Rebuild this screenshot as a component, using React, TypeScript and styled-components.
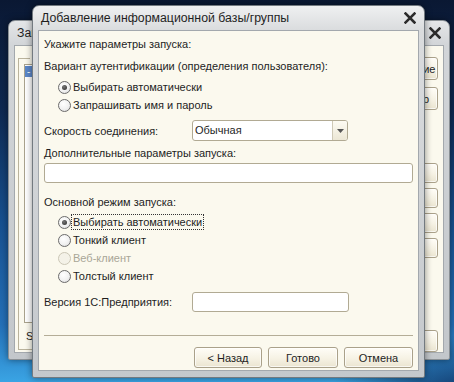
import React from 'react';
import styled, { createGlobalStyle } from 'styled-components';

const GlobalStyle = createGlobalStyle`
  html, body {
    margin: 0;
    padding: 0;
  }
  body {
    font-family: "Liberation Sans", Arial, sans-serif;
    font-size: 11px;
    color: #1e1e1e;
  }
`;

const Desktop = styled.div`
  position: relative;
  width: 454px;
  height: 382px;
  overflow: hidden;
  background:
    radial-gradient(ellipse 140px 60px at 470px 395px, #0b2a5c 0%, rgba(11, 42, 92, 0) 100%),
    linear-gradient(180deg, #0a1833 0%, #0e2850 28%, #17508f 58%, #2470b8 85%, #3aa4e4 100%);
`;

const Window = styled.div<{ $left: number; $top: number; $width: number; $height: number; $faded?: boolean }>`
  position: absolute;
  left: ${({ $left }) => $left}px;
  top: ${({ $top }) => $top}px;
  width: ${({ $width }) => $width}px;
  height: ${({ $height }) => $height}px;
  box-sizing: border-box;
  display: flex;
  flex-direction: column;
  padding: 0 5px 6px;
  border: 1px solid ${({ $faded }) => ($faded ? '#8a9095' : '#737a80')};
  border-radius: 7px 7px 2px 2px;
  background: ${({ $faded }) =>
    $faded
      ? 'linear-gradient(180deg, #e4e6e8 0px, #d2d5d8 24px, #c3c7cb 100%)'
      : 'linear-gradient(180deg, #eff0f1 0px, #dadcde 24px, #c4c8cc 100%)'};
  box-shadow: 0 0 7px rgba(0, 0, 0, 0.45);
`;

const TitleBar = styled.div`
  height: 24px;
  flex-shrink: 0;
  display: flex;
  align-items: center;
  justify-content: space-between;
  padding: 0 1px 0 3px;
  font-size: 12.3px;
  color: #1f1f1f;
  white-space: nowrap;
  overflow: hidden;
`;

const CloseButton = styled.span`
  width: 16px;
  height: 16px;
  display: inline-flex;
  align-items: center;
  justify-content: center;
  flex-shrink: 0;
`;

const Client = styled.div<{ $row?: boolean }>`
  flex: 1;
  min-height: 0;
  display: flex;
  flex-direction: ${({ $row }) => ($row ? 'row' : 'column')};
  background: #fbf9ee;
  border: 1px solid #a3a8ad;
  padding: 0 5px;
  overflow: hidden;
`;

/* ---------- background window ---------- */

const GroupBox = styled.fieldset`
  flex: 1;
  margin: 6px 0 2px -2px;
  padding: 0 0 0 5px;
  border: 1px solid #bab39c;
  display: flex;
  flex-direction: column;
  min-width: 0;
`;

const Legend = styled.legend`
  padding: 0 2px;
  margin-left: 6px;
  white-space: nowrap;
`;

const ListBox = styled.div`
  height: 256px;
  background: #ffffff;
  border: 1px solid #a9a28c;
  padding-top: 1px;
`;

const ListItem = styled.div<{ $selected?: boolean }>`
  height: 11px;
  line-height: 11px;
  padding-left: 2px;
  font-size: 10px;
  color: ${({ $selected }) => ($selected ? '#fff' : '#1e1e1e')};
  background: ${({ $selected }) => ($selected ? '#5b87c9' : 'transparent')};
  white-space: nowrap;
`;

const PathText = styled.div`
  margin-top: 7px;
  padding-left: 2px;
  white-space: nowrap;
`;

const SideButtons = styled.div`
  display: flex;
  flex-direction: column;
  align-items: flex-end;
  margin-left: 6px;
`;

const Button = styled.button<{ $width?: number; $height?: number; $mt?: number }>`
  box-sizing: border-box;
  width: ${({ $width }) => $width ?? 69}px;
  height: ${({ $height }) => $height ?? 21}px;
  margin-top: ${({ $mt }) => $mt ?? 0}px;
  flex-shrink: 0;
  padding: 0;
  font-family: inherit;
  font-size: 11px;
  color: #1e1e1e;
  border: 1px solid #aaa18a;
  border-radius: 3px;
  background: linear-gradient(180deg, #fffdf7 0%, #f6f2e4 55%, #ebe5d1 100%);
  box-shadow: inset 0 0 0 1px rgba(255, 255, 255, 0.7);
  white-space: nowrap;
  overflow: hidden;
  cursor: default;
`;

/* ---------- front dialog ---------- */

const Text = styled.div<{ $mt?: number }>`
  height: 18px;
  line-height: 18px;
  margin-top: ${({ $mt }) => $mt ?? 0}px;
  white-space: nowrap;
`;

const RadioRow = styled.label<{ $mt?: number }>`
  height: 18px;
  margin-top: ${({ $mt }) => $mt ?? 0}px;
  padding-left: 14px;
  display: flex;
  align-items: center;
  gap: 1px;
  white-space: nowrap;
`;

const RadioCircle = styled.span<{ $checked?: boolean; $disabled?: boolean }>`
  position: relative;
  box-sizing: border-box;
  width: 13px;
  height: 13px;
  border-radius: 50%;
  border: 1px solid ${({ $disabled }) => ($disabled ? '#cbc7b6' : '#6b6b6b')};
  background: ${({ $disabled }) =>
    $disabled ? '#f4f2e8' : 'radial-gradient(circle at 40% 35%, #ffffff 0%, #f1f1f1 55%, #d6d6d6 100%)'};
  flex-shrink: 0;

  &::after {
    content: '';
    display: ${({ $checked }) => ($checked ? 'block' : 'none')};
    position: absolute;
    left: 3px;
    top: 3px;
    width: 5px;
    height: 5px;
    border-radius: 50%;
    background: radial-gradient(circle at 40% 35%, #777 0%, #2a2a2a 100%);
  }
`;

const RadioText = styled.span<{ $focused?: boolean; $disabled?: boolean }>`
  line-height: 14px;
  padding: 0 1px;
  outline: ${({ $focused }) => ($focused ? '1px dotted #333' : 'none')};
  color: ${({ $disabled }) => ($disabled ? '#a9a697' : 'inherit')};
`;

const FieldRow = styled.div<{ $mt?: number }>`
  display: flex;
  align-items: center;
  margin-top: ${({ $mt }) => $mt ?? 0}px;
`;

const FieldLabel = styled.span`
  width: 148px;
  flex-shrink: 0;
  white-space: nowrap;
`;

const Input = styled.div<{ $width?: number; $height?: number; $mt?: number }>`
  box-sizing: border-box;
  width: ${({ $width }) => ($width ? `${$width}px` : '100%')};
  height: ${({ $height }) => $height ?? 20}px;
  margin-top: ${({ $mt }) => $mt ?? 0}px;
  flex-shrink: 0;
  background: #ffffff;
  border: 1px solid #b1aa93;
  border-radius: 3px;
`;

const Select = styled.div`
  box-sizing: border-box;
  width: 156px;
  height: 21px;
  display: flex;
  background: #ffffff;
  border: 1px solid #b1aa93;
  border-radius: 3px;
  overflow: hidden;
`;

const SelectValue = styled.span`
  flex: 1;
  padding-left: 2px;
  line-height: 19px;
  white-space: nowrap;
`;

const SelectArrow = styled.span`
  width: 14px;
  display: flex;
  align-items: center;
  justify-content: center;
  border-left: 1px solid #cfc9b6;
  background: linear-gradient(180deg, #fdfbf3 0%, #ece7d5 100%);
`;

const Separator = styled.div<{ $mt?: number }>`
  height: 1px;
  margin-top: ${({ $mt }) => $mt ?? 0}px;
  background: #b4ad97;
  flex-shrink: 0;
`;

const ButtonBar = styled.div`
  display: flex;
  justify-content: flex-end;
  gap: 6px;
  margin-top: 11px;
`;

function CloseIcon() {
  return (
    <svg width="12" height="12" viewBox="0 0 12 12">
      <path d="M1.5 1.5 L10.5 10.5 M10.5 1.5 L1.5 10.5" stroke="#2b2b2b" strokeWidth="2.5" strokeLinecap="square" />
    </svg>
  );
}

function Radio({
  label,
  checked,
  disabled,
  focused,
  mt,
}: {
  label: string;
  checked?: boolean;
  disabled?: boolean;
  focused?: boolean;
  mt?: number;
}) {
  return (
    <RadioRow $mt={mt}>
      <RadioCircle $checked={checked} $disabled={disabled} />
      <RadioText $focused={focused} $disabled={disabled}>
        {label}
      </RadioText>
    </RadioRow>
  );
}

export default function App() {
  return (
    <Desktop>
      <GlobalStyle />

      <Window $left={8} $top={20} $width={442} $height={340} $faded>
        <TitleBar>
          <span>Запуск 1С:Предприятия</span>
          <CloseButton>
            <CloseIcon />
          </CloseButton>
        </TitleBar>
        <Client $row>
          <GroupBox>
            <Legend>Информационные базы</Legend>
            <ListBox>
              <ListItem $selected>- Новая база</ListItem>
            </ListBox>
            <PathText>Srvr="server";Ref="base";</PathText>
          </GroupBox>
          <SideButtons>
            <Button $width={90} $height={23} $mt={11}>1С:Предприятие</Button>
            <Button $width={90} $height={23} $mt={7}>Конфигуратор</Button>
            <Button $width={90} $height={20} $mt={53}>Добавить...</Button>
            <Button $width={90} $height={20} $mt={5}>Изменить...</Button>
            <Button $width={90} $height={20} $mt={5}>Удалить</Button>
            <Button $width={90} $height={20} $mt={5}>Настройка...</Button>
            <Button $width={90} $height={22} $mt={72}>Выход</Button>
          </SideButtons>
        </Client>
      </Window>

      <Window $left={32} $top={5} $width={393} $height={373}>
        <TitleBar>
          <span>Добавление информационной базы/группы</span>
          <CloseButton>
            <CloseIcon />
          </CloseButton>
        </TitleBar>
        <Client>
          <Text $mt={4}>Укажите параметры запуска:</Text>
          <Text $mt={4}>Вариант аутентификации (определения пользователя):</Text>
          <Radio label="Выбирать автоматически" checked mt={3} />
          <Radio label="Запрашивать имя и пароль" />
          <FieldRow $mt={6}>
            <FieldLabel>Скорость соединения:</FieldLabel>
            <Select>
              <SelectValue>Обычная</SelectValue>
              <SelectArrow>
                <svg width="7" height="4" viewBox="0 0 7 4">
                  <path d="M0 0 H7 L3.5 4 Z" fill="#555" />
                </svg>
              </SelectArrow>
            </Select>
          </FieldRow>
          <Text $mt={3}>Дополнительные параметры запуска:</Text>
          <Input $mt={1} />
          <Text $mt={10}>Основной режим запуска:</Text>
          <Radio label="Выбирать автоматически" checked focused mt={2} />
          <Radio label="Тонкий клиент" />
          <Radio label="Веб-клиент" disabled />
          <Radio label="Толстый клиент" />
          <FieldRow $mt={7}>
            <FieldLabel>Версия 1С:Предприятия:</FieldLabel>
            <Input $width={157} />
          </FieldRow>
          <Separator $mt={23} />
          <ButtonBar>
            <Button $width={68}>&lt; Назад</Button>
            <Button $width={70}>Готово</Button>
            <Button $width={69}>Отмена</Button>
          </ButtonBar>
        </Client>
      </Window>
    </Desktop>
  );
}
